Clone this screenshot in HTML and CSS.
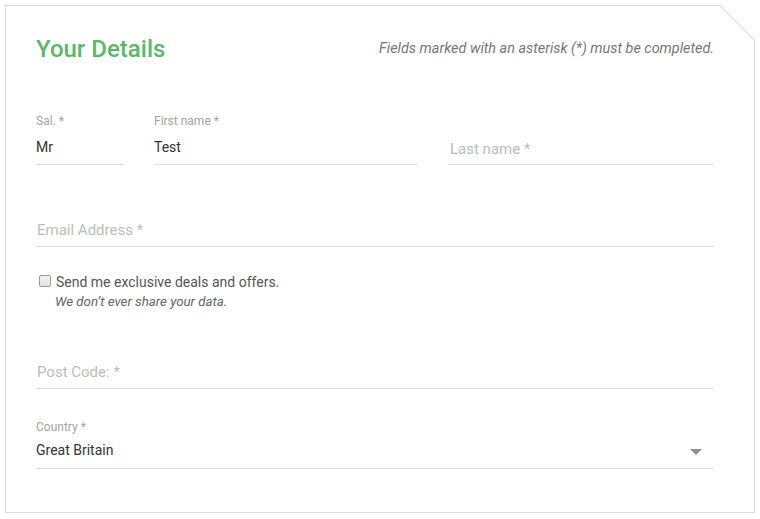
FILE: index.html
```html
<!DOCTYPE html>
<html lang="en">
<head>
<meta charset="utf-8">
<title>Your Details</title>
<link rel="stylesheet" href="styles.css">
</head>
<body>
<div class="card">
  <form class="card-inner">
    <div class="header">
      <h2 class="title">Your Details</h2>
      <p class="note">Fields marked with an asterisk (*) must be completed.</p>
    </div>

    <div class="row-names">
      <div class="field">
        <label class="label">Sal. *</label>
        <input class="input" type="text" value="Mr">
      </div>
      <div class="field">
        <label class="label">First name *</label>
        <input class="input" type="text" value="Test">
      </div>
      <div class="field">
        <span class="label"></span>
        <input class="input input-ph" type="text" placeholder="Last name *">
      </div>
    </div>

    <div class="field field-email">
      <span class="label"></span>
      <input class="input input-ph input-ph-up" type="text" placeholder="Email Address *">
    </div>

    <div class="optin">
      <label class="check-row">
        <span class="checkbox"></span>
        <span class="check-text">Send me exclusive deals and offers.</span>
      </label>
      <p class="check-note">We don’t ever share your data.</p>
    </div>

    <div class="field field-post">
      <span class="label"></span>
      <input class="input input-ph input-ph-up" type="text" placeholder="Post Code: *">
    </div>

    <div class="field field-country">
      <label class="label">Country *</label>
      <div class="select">
        <span class="select-value">Great Britain</span>
        <span class="select-arrow"></span>
      </div>
    </div>
  </form>
</div>
</body>
</html>
```

FILE: styles.css
```css
* { box-sizing: border-box; }

html, body {
  margin: 0;
  padding: 0;
  background: #fff;
}

body {
  padding: 5px;
  font-family: Roboto, "Liberation Sans", Arial, sans-serif;
  color: #333;
}

.card {
  width: 750px;
  height: 508px;
  background: #dcdcdc;
  padding: 1px;
  clip-path: polygon(0 0, calc(100% - 35px) 0, 100% 35px, 100% 100%, 0 100%);
}

.card-inner {
  height: 100%;
  background: #fff;
  padding: 28px 40px 0 30px;
  clip-path: polygon(0 0, calc(100% - 34.4px) 0, 100% 34.4px, 100% 100%, 0 100%);
  display: flex;
  flex-direction: column;
}

.header {
  display: flex;
  justify-content: space-between;
  align-items: center;
  height: 30px;
}

.title {
  margin: 0;
  font-size: 24px;
  font-weight: 500;
  line-height: 30px;
  color: #5cb76a;
}

.note {
  margin: 0;
  font-size: 14.4px;
  font-style: italic;
  color: #777;
  line-height: 20px;
}

.row-names {
  display: grid;
  grid-template-columns: 88px 264px 1fr;
  column-gap: 30px;
  margin-top: 49px;
}

.field {
  display: flex;
  flex-direction: column;
}

.label {
  display: block;
  height: 16px;
  font-size: 12px;
  line-height: 16px;
  color: #a3a3a3;
}

.input {
  display: block;
  width: 100%;
  height: 36px;
  margin: 0;
  border: 0;
  border-bottom: 1px solid #dedede;
  padding: 8px 0 7px 0;
  font-family: inherit;
  font-size: 14px;
  line-height: 20px;
  color: #333;
  background: transparent;
  outline: none;
}

.input-ph {
  padding: 10px 0 5px 2px;
  font-size: 15px;
}

.input-ph-up {
  padding: 9px 0 6px 1px;
}

.input-ph::placeholder {
  color: #bcbcbc;
  opacity: 1;
}

.field-email {
  margin-top: 30px;
}

.optin {
  margin-top: 26px;
  padding-left: 3px;
}

.check-row {
  display: flex;
  align-items: flex-start;
  gap: 5px;
}

.checkbox {
  width: 12px;
  height: 12px;
  margin-top: 2px;
  border: 1px solid #9b9b9b;
  border-radius: 2px;
  background: linear-gradient(#f4f4f4, #e2e2e2);
  flex: none;
}

.check-text {
  font-size: 14px;
  line-height: 18px;
  color: #555;
}

.check-note {
  margin: 2px 0 0 16px;
  font-size: 13.3px;
  line-height: 17px;
  font-style: italic;
  color: #666;
}

.field-post {
  margin-top: 27px;
}

.field-country {
  margin-top: 30px;
}

.select {
  height: 34px;
  border-bottom: 1px solid #dedede;
  padding-top: 5px;
  display: flex;
  justify-content: space-between;
}

.select-value {
  font-size: 14px;
  line-height: 20px;
  color: #333;
}

.select-arrow {
  width: 0;
  height: 0;
  margin: 9px 12px 0 0;
  border-left: 6px solid transparent;
  border-right: 6px solid transparent;
  border-top: 6px solid #8f8f8f;
}
```
